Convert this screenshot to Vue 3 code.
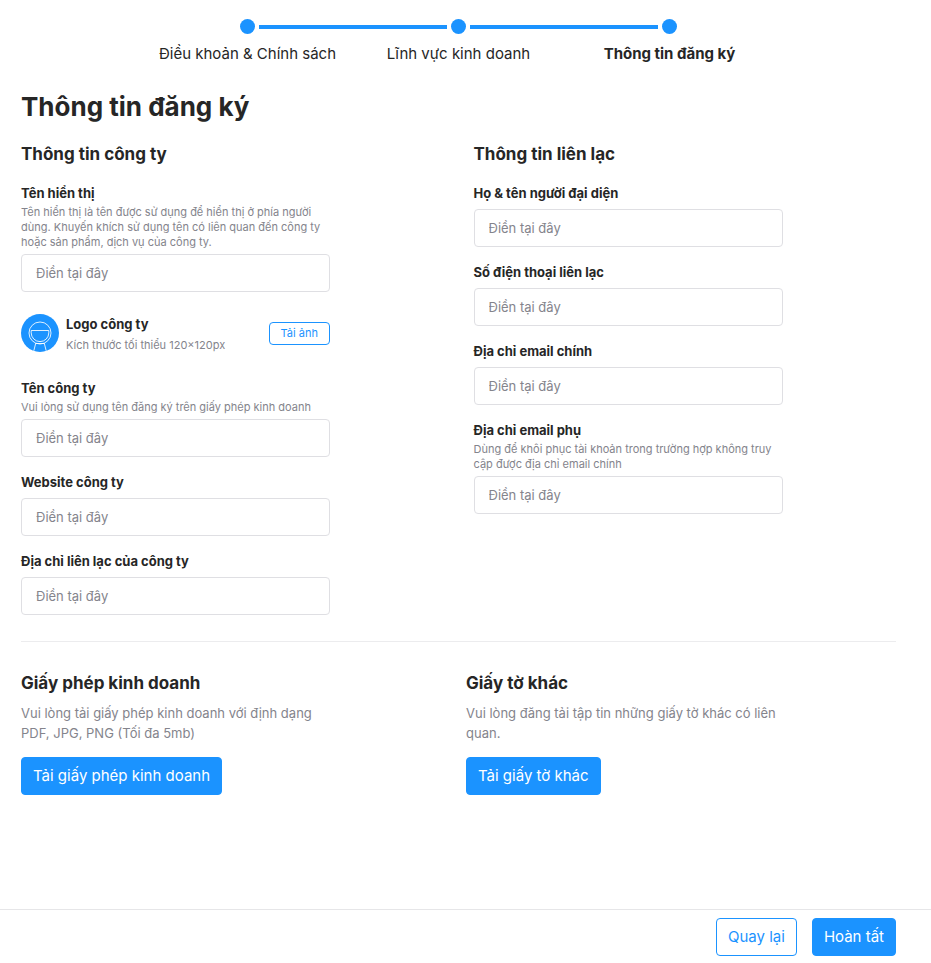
<script setup>
const steps = [
  { label: 'Điều khoản & Chính sách' },
  { label: 'Lĩnh vực kinh doanh' },
  { label: 'Thông tin đăng ký', current: true },
]

const displayName = {
  id: 'display-name',
  label: 'Tên hiển thị',
  hint: 'Tên hiển thị là tên được sử dụng để hiển thị ở phía người dùng. Khuyến khích sử dụng tên có liên quan đến công ty hoặc sản phẩm, dịch vụ của công ty.',
}

const companyFields = [
  { id: 'company-name', label: 'Tên công ty', hint: 'Vui lòng sử dụng tên đăng ký trên giấy phép kinh doanh' },
  { id: 'company-website', label: 'Website công ty' },
  { id: 'company-address', label: 'Địa chỉ liên lạc của công ty' },
]

const contactFields = [
  { id: 'contact-name', label: 'Họ & tên người đại diện' },
  { id: 'contact-phone', label: 'Số điện thoại liên lạc', type: 'tel' },
  { id: 'contact-email', label: 'Địa chỉ email chính', type: 'email' },
  {
    id: 'backup-email',
    label: 'Địa chỉ email phụ',
    type: 'email',
    hint: 'Dùng để khôi phục tài khoản trong trường hợp không truy cập được địa chỉ email chính',
  },
]

const documents = [
  {
    title: 'Giấy phép kinh doanh',
    text: 'Vui lòng tải giấy phép kinh doanh với định dạng PDF, JPG, PNG (Tối đa 5mb)',
    action: 'Tải giấy phép kinh doanh',
  },
  {
    title: 'Giấy tờ khác',
    text: 'Vui lòng đăng tải tập tin những giấy tờ khác có liên quan.',
    action: 'Tải giấy tờ khác',
  },
]
</script>

<template>
  <div class="page">
    <main class="content">
      <ol class="steps">
        <li v-for="step in steps" :key="step.label" class="step" :aria-current="step.current ? 'step' : undefined">
          <span class="track">
            <span class="line"></span>
            <span class="dot"></span>
            <span class="line"></span>
          </span>
          <span class="step-label">{{ step.label }}</span>
        </li>
      </ol>

      <h1>Thông tin đăng ký</h1>

      <form id="register" class="columns" @submit.prevent>
        <section>
          <h2>Thông tin công ty</h2>
          <div class="fields">
            <div class="field">
              <label :for="displayName.id">{{ displayName.label }}</label>
              <p id="display-name-hint" class="hint">{{ displayName.hint }}</p>
              <input :id="displayName.id" type="text" placeholder="Điền tại đây" aria-describedby="display-name-hint" />
            </div>

            <div class="logo-row">
              <svg class="avatar" viewBox="0 0 38 38" fill="none" aria-hidden="true">
                <circle cx="19" cy="19" r="19" fill="#1b93ff" />
                <g stroke="#fff" stroke-opacity="0.85">
                  <circle cx="19" cy="19" r="11" />
                  <path d="M10.2 16.5h17.6v2.3a8.8 8.8 0 0 1-17.6 0z" />
                  <path d="M14.7 29.3 12.8 36.8M23.3 29.3l1.9 7.5M14.5 29.5h9" />
                </g>
              </svg>
              <div class="logo-text">
                <p class="logo-title">Logo công ty</p>
                <p class="logo-hint">Kích thước tối thiểu 120×120px</p>
              </div>
              <button type="button" class="button outline small">Tải ảnh</button>
            </div>

            <div v-for="field in companyFields" :key="field.id" class="field">
              <label :for="field.id">{{ field.label }}</label>
              <p v-if="field.hint" :id="field.id + '-hint'" class="hint">{{ field.hint }}</p>
              <input
                :id="field.id"
                type="text"
                placeholder="Điền tại đây"
                :aria-describedby="field.hint ? field.id + '-hint' : undefined"
              />
            </div>
          </div>
        </section>

        <section>
          <h2>Thông tin liên lạc</h2>
          <div class="fields">
            <div v-for="field in contactFields" :key="field.id" class="field">
              <label :for="field.id">{{ field.label }}</label>
              <p v-if="field.hint" :id="field.id + '-hint'" class="hint">{{ field.hint }}</p>
              <input
                :id="field.id"
                :type="field.type || 'text'"
                placeholder="Điền tại đây"
                :aria-describedby="field.hint ? field.id + '-hint' : undefined"
              />
            </div>
          </div>
        </section>
      </form>

      <div class="documents">
        <section v-for="doc in documents" :key="doc.title">
          <h2>{{ doc.title }}</h2>
          <p class="doc-text">{{ doc.text }}</p>
          <button type="button" class="button primary">{{ doc.action }}</button>
        </section>
      </div>
    </main>

    <footer class="footer">
      <button type="button" class="button outline">Quay lại</button>
      <button type="submit" form="register" class="button primary">Hoàn tất</button>
    </footer>
  </div>
</template>

<style>
body {
  margin: 0;
  background: #fff;
}
</style>

<style scoped>
.page {
  --blue: #1b93ff;
  --ink: #262626;
  --muted: #84848c;
  box-sizing: border-box;
  display: flex;
  flex-direction: column;
  min-height: 100vh;
  color: var(--ink);
  font-family: Inter, "Noto Sans", sans-serif;
  font-size: 15px;
  line-height: 20px;
}

.page * {
  box-sizing: border-box;
}

.content {
  flex: 1;
  padding: 19px 35px 24px 21px;
}

h1,
h2,
p {
  margin: 0;
}

.steps {
  display: grid;
  grid-template-columns: repeat(3, 1fr);
  max-width: 633px;
  margin: 0 auto;
  padding: 0;
  list-style: none;
}

.step {
  display: flex;
  flex-direction: column;
  gap: 10px;
  text-align: center;
}

.track {
  display: flex;
  align-items: center;
  gap: 4px;
}

.line {
  flex: 1;
  height: 4px;
  background: var(--blue);
}

.step:first-child .line:first-child,
.step:last-child .line:last-child {
  visibility: hidden;
}

.dot {
  width: 15px;
  height: 15px;
  border-radius: 50%;
  background: var(--blue);
}

.step[aria-current] .step-label {
  font-weight: 700;
}

h1 {
  margin-top: 26px;
  font-size: 26px;
  font-weight: 700;
  line-height: 34px;
}

h2 {
  font-size: 17px;
  font-weight: 700;
  line-height: 24px;
}

.columns {
  display: grid;
  grid-template-columns: 1fr 1fr;
  gap: 30px;
  margin-top: 18px;
  padding-bottom: 26px;
  border-bottom: 1px solid #ececee;
}

.fields {
  display: flex;
  flex-direction: column;
  gap: 14px;
  max-width: 309px;
  margin-top: 16px;
}

.field {
  display: flex;
  flex-direction: column;
}

label,
.logo-title {
  font-size: 13px;
  font-weight: 700;
  line-height: 22px;
}

.hint {
  margin-top: 1px;
  color: var(--muted);
  font-size: 11px;
  line-height: 15px;
}

input {
  width: 100%;
  height: 38px;
  margin-top: 5px;
  padding: 0 14px;
  border: 1px solid #dfdfe3;
  border-radius: 4px;
  background: #fff;
  color: var(--ink);
  font: inherit;
  font-size: 13px;
}

.hint + input {
  margin-top: 4px;
}

input::placeholder {
  color: var(--muted);
  opacity: 1;
}

.logo-row {
  display: flex;
  align-items: center;
  gap: 7px;
  margin: 5px 0 8px;
}

.avatar {
  flex: none;
  width: 38px;
  height: 38px;
}

.logo-text {
  flex: 1;
  padding-top: 2px;
}

.logo-hint {
  color: var(--muted);
  font-size: 11px;
  line-height: 20px;
}

.button {
  height: 38px;
  padding: 0 11px;
  border: 1px solid var(--blue);
  border-radius: 4px;
  font: inherit;
  cursor: pointer;
}

.primary {
  background: var(--blue);
  color: #fff;
}

.outline {
  background: #fff;
  color: var(--blue);
}

.small {
  height: 23px;
  font-size: 11px;
  line-height: 15px;
}

.documents {
  display: grid;
  grid-template-columns: 1fr 1fr;
  gap: 15px;
  padding-top: 29px;
}

.doc-text {
  max-width: 316px;
  margin: 8px 0 14px;
  color: var(--muted);
  font-size: 13px;
}

.footer {
  display: flex;
  justify-content: flex-end;
  gap: 15px;
  padding: 8px 35px 7px 21px;
  border-top: 1px solid #e6e6e8;
}
</style>
